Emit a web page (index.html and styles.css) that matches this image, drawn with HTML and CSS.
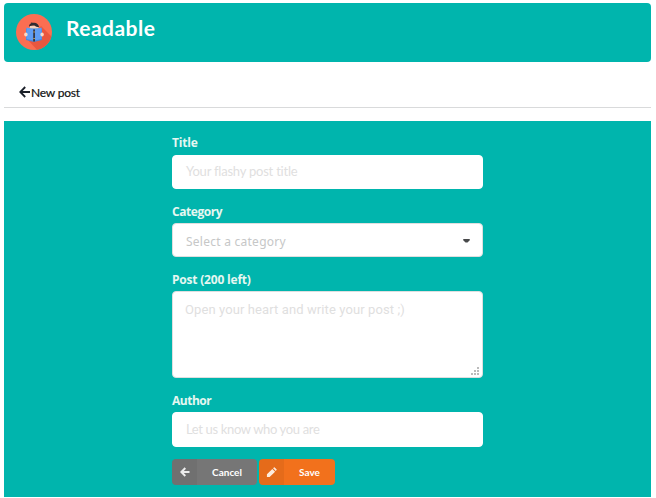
FILE: index.html
```html
<!DOCTYPE html>
<html lang="en">
<head>
<meta charset="utf-8">
<title>Readable</title>
<link rel="stylesheet" href="styles.css">
</head>
<body>
<header class="header">
  <svg class="logo" viewBox="0 0 36 36" aria-hidden="true">
    <defs><clipPath id="disc"><circle cx="18" cy="18" r="18"/></clipPath></defs>
    <circle cx="18" cy="18" r="18" fill="#fb6e52"/>
    <path clip-path="url(#disc)" fill="#e9573f" d="M25 12 38 25V38H23L12 26z"/>
    <path fill="#f3d3bd" d="M13.800 11.500h8.700v3.500h-8.700z"/>
    <path fill="#302c32" d="M13 12.700c-.1-2 1-3 2.200-3.500l-.5-.7 2.300.3c3-.6 5.500 1 6.200 4.400-2.200 0-3.500-.7-4.700-1.700-2 .1-4 .2-5.500 1.200z"/>
    <path fill="#4586dd" d="M10 14.500h16V26l-7 1.800h-2L10 26z"/>
    <path fill="#5f9df2" d="m10.500 13.600 7 1.600v11.300L10.500 25zM25.500 13.600l-7 1.600v11.300l7-1.500z"/>
    <path fill="#343845" d="M17.200 15.500h1.800v12h-1.800z"/>
    <path fill="#b39a5c" d="M17.200 17.500h1.800v1h-1.800zM17.200 24h1.800v1h-1.800z"/>
    <ellipse cx="9.900" cy="20.500" rx="1.700" ry="2" fill="#fad9c5"/>
    <ellipse cx="26.100" cy="20.500" rx="1.700" ry="2" fill="#fad9c5"/>
  </svg>
  <h1 class="brand">Readable</h1>
</header>
<nav class="nav">
  <a class="back">
    <svg class="back-icon" viewBox="0 0 12 12" aria-hidden="true"><path d="M6.200 1 1.300 6l4.900 5M1.500 6H11"/></svg>
    <span class="back-text">New post</span>
  </a>
</nav>
<main class="panel">
  <form class="form">
    <div class="field">
      <label class="label label-title">Title</label>
      <div class="control plain"><span class="hint hint-title">Your flashy post title</span></div>
    </div>
    <div class="field">
      <label class="label label-category">Category</label>
      <div class="control select"><span class="hint hint-category">Select a category</span>
        <svg class="caret" viewBox="0 0 7 4" aria-hidden="true"><path d="M.5 0h6l.5 1-2.500 2.500h-2L0 1z"/></svg>
      </div>
    </div>
    <div class="field">
      <label class="label label-post">Post (200 left)</label>
      <div class="control area"><span class="hint hint-post">Open your heart and write your post ;)</span>
        <svg class="grip" viewBox="0 0 8 8" aria-hidden="true"><path d="M6 0h2v2H6zM3 3h2v2H3zM6 3h2v2H6zM0 6h2v2H0zM3 6h2v2H3zM6 6h2v2H6z"/></svg>
      </div>
    </div>
    <div class="field">
      <label class="label label-author">Author</label>
      <div class="control plain author"><span class="hint hint-author">Let us know who you are</span></div>
    </div>
    <div class="actions">
      <button type="button" class="button cancel">
        <span class="button-icon"><svg class="arrow" viewBox="0 0 10 10" aria-hidden="true"><path d="M5.300 1 1.300 5l4 4M1.500 5h8"/></svg></span>
        <span class="button-text">Cancel</span>
      </button>
      <button type="button" class="button save">
        <span class="button-icon"><svg class="pencil" viewBox="0 0 12 12" aria-hidden="true"><path d="M1 8 6.900 2.100l3 3L4 11H1zM7.700 1.400 8.600.5Q9 .1 9.500.5l2 2q.4.5 0 .9l-.9.9z"/></svg></span>
        <span class="button-text">Save</span>
      </button>
    </div>
  </form>
</main>
</body>
</html>
```

FILE: styles.css
```css
* {
  box-sizing: border-box;
}

body {
  margin: 0;
  padding: 3px 5px 0 4px;
  height: 498px;
  overflow: hidden;
  background: #fff;
  font-family: Lato, "Liberation Sans", sans-serif;
}

.header {
  display: flex;
  height: 59px;
  padding: 11px 12px;
  background: #00b5ad;
  border-radius: 4px;
}

.logo {
  width: 36px;
  height: 36px;
}

.brand {
  margin: 0 0 0 14px;
  color: #fff;
  font-size: 21px;
  line-height: 27px;
  font-weight: 700;
  letter-spacing: 0.47px;
}

.nav {
  height: 46px;
  padding: 22px 15px 0;
  border-bottom: 1px solid #d9dadb;
}

.back {
  display: flex;
  align-items: center;
  height: 17px;
  color: #111;
  font-size: 12px;
  letter-spacing: -0.2px;
}

.back-icon {
  width: 12px;
  height: 12px;
  margin-top: -2px;
  fill: none;
  stroke: #1b2029;
  stroke-width: 1.8;
}

.back-text {
  -webkit-text-stroke: 0.2px #111;
}

.panel {
  height: 376px;
  margin-top: 13px;
  padding: 13px 168px 0;
  background: #00b5ad;
}

.form {
  display: flex;
  flex-direction: column;
}

.field {
  display: flex;
  flex-direction: column;
  margin-bottom: 13px;
}

.label {
  align-self: flex-start;
  height: 21px;
  color: #e6f7f1;
  font-family: "Open Sans", sans-serif;
  font-size: 12px;
  line-height: 18px;
  font-weight: 700;
  white-space: nowrap;
}

.label-title {
  letter-spacing: -0.2px;
}

.label-category {
  padding-top: 1px;
  letter-spacing: -0.45px;
}

.label-post {
  padding-top: 1px;
  letter-spacing: -0.2px;
}

.label-author {
  padding-top: 1px;
  letter-spacing: -0.5px;
}

.control {
  display: flex;
  width: 311px;
  height: 34px;
  padding: 0 13px;
  background: #fff;
  border: 1px solid #dedfdf;
  border-radius: 4px;
  white-space: nowrap;
}

.plain {
  border-color: #fff;
}

.select {
  align-items: center;
  justify-content: space-between;
}

.area {
  position: relative;
  height: 87px;
  padding: 8px 12px;
}

.author {
  height: 35px;
}

.hint {
  color: #dfe0e0;
  font-size: 13px;
  line-height: 32px;
}

.hint-title {
  line-height: 31px;
  letter-spacing: -0.22px;
}

.hint-category {
  padding-top: 3px;
  color: #c6c7c7;
  font-family: "Noto Sans", sans-serif;
  font-size: 12px;
  letter-spacing: 0.25px;
}

.hint-post {
  height: 20px;
  font-family: Roboto, sans-serif;
  line-height: 19px;
  letter-spacing: 0.1px;
}

.hint-author {
  letter-spacing: -0.35px;
}

.caret {
  width: 7px;
  height: 4px;
  margin-right: -1px;
  margin-top: 2px;
  fill: #47494b;
}

.grip {
  position: absolute;
  right: 3px;
  bottom: 2px;
  width: 8px;
  height: 8px;
  fill: #bbb;
}

.actions {
  display: flex;
  gap: 2px;
  margin-top: -1px;
}

.button {
  display: flex;
  height: 26px;
  padding: 0;
  overflow: hidden;
  border: 0;
  border-radius: 4px;
  color: #fff;
  font-family: Lato, sans-serif;
  font-size: 10px;
  font-weight: 700;
}

.cancel {
  width: 85px;
  background: #767676;
}

.save {
  width: 76px;
  background: #f2711c;
}

.button-icon {
  display: flex;
  align-items: center;
  justify-content: center;
  width: 25px;
  height: 26px;
  background: rgb(0 0 0 / 5%);
}

.button-text {
  flex: 1;
  line-height: 27px;
  text-align: center;
}

.arrow {
  width: 10px;
  height: 10px;
  fill: none;
  stroke: #ececec;
  stroke-width: 2;
}

.pencil {
  width: 11px;
  height: 11px;
  fill: #fdebdc;
}
```
